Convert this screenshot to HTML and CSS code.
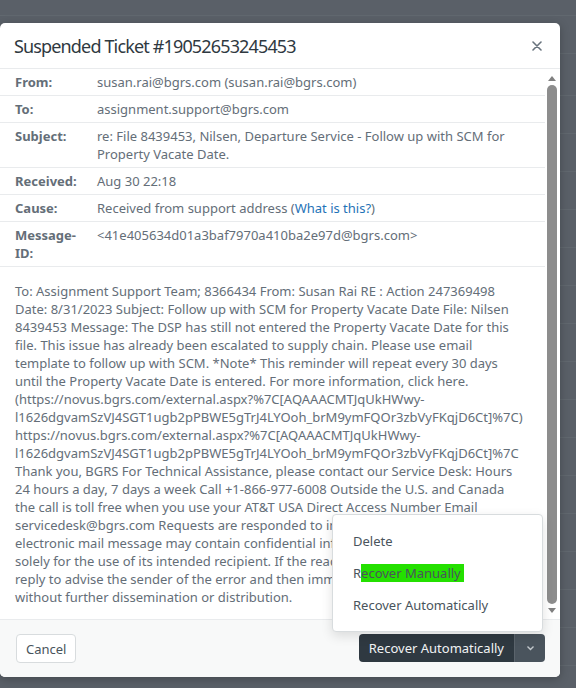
FILE: index.html
```html
<!DOCTYPE html>
<html lang="en">
<head>
  <meta charset="UTF-8">
  <meta name="viewport" content="width=device-width, initial-scale=1.0">
  <title>Suspended Ticket</title>
  <link rel="stylesheet" href="styles.css">
</head>
<body>
  <div class="modal">
    <header class="modal-header">
      <h2>Suspended Ticket #19052653245453</h2>
      <button class="close" aria-label="Close">
        <svg width="10" height="10" viewBox="0 0 10 10"><path d="M1 1l8 8M9 1l-8 8" stroke="#68737d" stroke-width="1.6" stroke-linecap="round"/></svg>
      </button>
    </header>

    <div class="modal-body">
      <div class="scroll-content">
        <div class="row"><span class="label">From:</span><span class="value">susan.rai@bgrs.com (susan.rai@bgrs.com)</span></div>
        <div class="row"><span class="label">To:</span><span class="value">assignment.support@bgrs.com</span></div>
        <div class="row"><span class="label">Subject:</span><span class="value">re: File 8439453, Nilsen, Departure Service - Follow up with SCM for Property Vacate Date.</span></div>
        <div class="row"><span class="label">Received:</span><span class="value">Aug 30 22:18</span></div>
        <div class="row"><span class="label">Cause:</span><span class="value">Received from support address (<a href="#">What is this?</a>)</span></div>
        <div class="row"><span class="label">Message-ID:</span><span class="value">&lt;41e405634d01a3baf7970a410ba2e97d@bgrs.com&gt;</span></div>

        <!-- lines are broken where the mail client wrapped them -->
        <p class="message">To: Assignment Support Team; 8366434 From: Susan Rai RE : Action 247369498<br>
Date: 8/31/2023 Subject: Follow up with SCM for Property Vacate Date File: Nilsen<br>
8439453 Message: The DSP has still not entered the Property Vacate Date for this<br>
file. This issue has already been escalated to supply chain. Please use email<br>
template to follow up with SCM. *Note* This reminder will repeat every 30 days<br>
until the Property Vacate Date is entered. For more information, click here.<br>
(https://novus.bgrs.com/external.aspx?%7C[AQAAACMTJqUkHWwy-<br>
l1626dgvamSzVJ4SGT1ugb2pPBWE5gTrJ4LYOoh_brM9ymFQOr3zbVyFKqjD6Ct]%7C)<br>
https://novus.bgrs.com/external.aspx?%7C[AQAAACMTJqUkHWwy-<br>
l1626dgvamSzVJ4SGT1ugb2pPBWE5gTrJ4LYOoh_brM9ymFQOr3zbVyFKqjD6Ct]%7C<br>
Thank you, BGRS For Technical Assistance, please contact our Service Desk: Hours<br>
24 hours a day, 7 days a week Call +1-866-977-6008 Outside the U.S. and Canada<br>
the call is toll free when you use your AT&amp;T USA Direct Access Number Email<br>
servicedesk@bgrs.com Requests are responded to in the order received. This<br>
electronic mail message may contain confidential information and is<br>
solely for the use of its intended recipient. If the reader is not the<br>
reply to advise the sender of the error and then immediately delete it<br>
without further dissemination or distribution.</p>
      </div>
      <div class="scrollbar">
        <svg class="arrow" width="8" height="5" viewBox="0 0 8 5"><path d="M0 5L4 0l4 5z" fill="#808080"/></svg>
        <span class="thumb"></span>
        <svg class="arrow" width="8" height="5" viewBox="0 0 8 5"><path d="M0 0h8L4 5z" fill="#808080"/></svg>
      </div>
    </div>

    <footer class="modal-footer">
      <button class="btn">Cancel</button>
      <div class="split">
        <button class="btn-dark">Recover Automatically</button>
        <button class="btn-dark btn-caret" aria-label="More">
          <svg width="9" height="6" viewBox="0 0 9 6"><path d="M1.5 1.5l3 3 3-3" fill="none" stroke="#c2c8cc" stroke-width="1.4"/></svg>
        </button>
        <ul class="menu">
          <li>Delete</li>
          <li>R<span class="highlight">ecover Manually</span></li>
          <li>Recover Automatically</li>
        </ul>
      </div>
    </footer>
  </div>
</body>
</html>
```

FILE: styles.css
```css
* {
  box-sizing: border-box;
}

body {
  margin: 0;
  height: 688px;
  overflow: hidden;
  font-family: "Noto Sans", "Segoe UI", sans-serif;
  font-size: 13px;
  color: #646e78;
  background-color: #5a6068;
  /* faint table rows of the page behind the backdrop */
  background-image: repeating-linear-gradient(to bottom, transparent 0 37px, #61686f 37px 38px);
  background-position: 0 58px;
}

.modal {
  width: 560px;
  margin-top: 23px;
  background: #fff;
  border-radius: 5px;
  box-shadow: 0 2px 10px rgba(0, 0, 0, 0.25);
}

.modal-header {
  height: 46px;
  display: flex;
  align-items: center;
  justify-content: space-between;
  padding: 0 18px 0 14px;
  border-bottom: 1px solid #e9ebed;
}

.modal-header h2 {
  margin: 0;
  font-size: 18px;
  font-weight: 400;
  letter-spacing: -0.85px;
  color: #2f3941;
}

.close {
  border: none;
  background: none;
  padding: 0;
  display: flex;
}

.modal-body {
  display: flex;
  height: 550px;
}

.scroll-content {
  flex: 1;
  overflow: hidden;
}

.row {
  display: flex;
  padding: 4px 15px;
  line-height: 18px;
  border-bottom: 1px solid #e9ebed;
}

.label {
  flex: none;
  width: 82px;
  padding-right: 12px;
  font-weight: 700;
}

.value {
  flex: 1;
}

.value a {
  color: #1f73b7;
  text-decoration: none;
}

.message {
  margin: 0;
  padding: 15px 15px 0;
  line-height: 18px;
  white-space: nowrap;
}

/* scrollbar of the message pane */
.scrollbar {
  flex: none;
  width: 15px;
  display: flex;
  flex-direction: column;
  align-items: center;
  padding: 7px 3px 6px 2px;
  gap: 4px;
}

.arrow {
  flex: none;
}

.thumb {
  flex: 1;
  width: 10px;
  border-radius: 5px;
  background: #8d8d8d;
}

.modal-footer {
  height: 58px;
  display: flex;
  align-items: flex-start;
  justify-content: space-between;
  padding: 14px 15px 0 16px;
  background: #f8f9f9;
  border-top: 1px solid #e9ebed;
  border-radius: 0 0 5px 5px;
}

.btn, .btn-dark {
  font-family: inherit;
  font-size: 13px;
  height: 29px;
  cursor: pointer;
}

.btn {
  padding: 0 9px;
  background: #fff;
  color: #49545c;
  border: 1px solid #d8dcde;
  border-radius: 4px;
}

.split {
  position: relative;
  display: flex;
}

.btn-dark {
  height: 28px;
  padding: 0 10px;
  border: none;
  color: #f1f3f4;
  background: #2f3941;
  border-radius: 4px 0 0 4px;
}

.btn-caret {
  width: 31px;
  padding: 0;
  display: flex;
  align-items: center;
  justify-content: center;
  background: #4a545d;
  border-left: 1px solid #5b646c;
  border-radius: 0 4px 4px 0;
}

.menu {
  position: absolute;
  right: 2px;
  bottom: calc(100% + 2px);
  width: 211px;
  margin: 0;
  padding: 10px 0;
  list-style: none;
  background: #fff;
  border: 1px solid #d8dcde;
  border-radius: 4px;
  box-shadow: 0 4px 12px rgba(0, 0, 0, 0.12);
}

.menu li {
  line-height: 32px;
  padding-left: 20px;
  color: #49545c;
}

.highlight {
  background: #24e000;
  padding-right: 3px;
}
```
